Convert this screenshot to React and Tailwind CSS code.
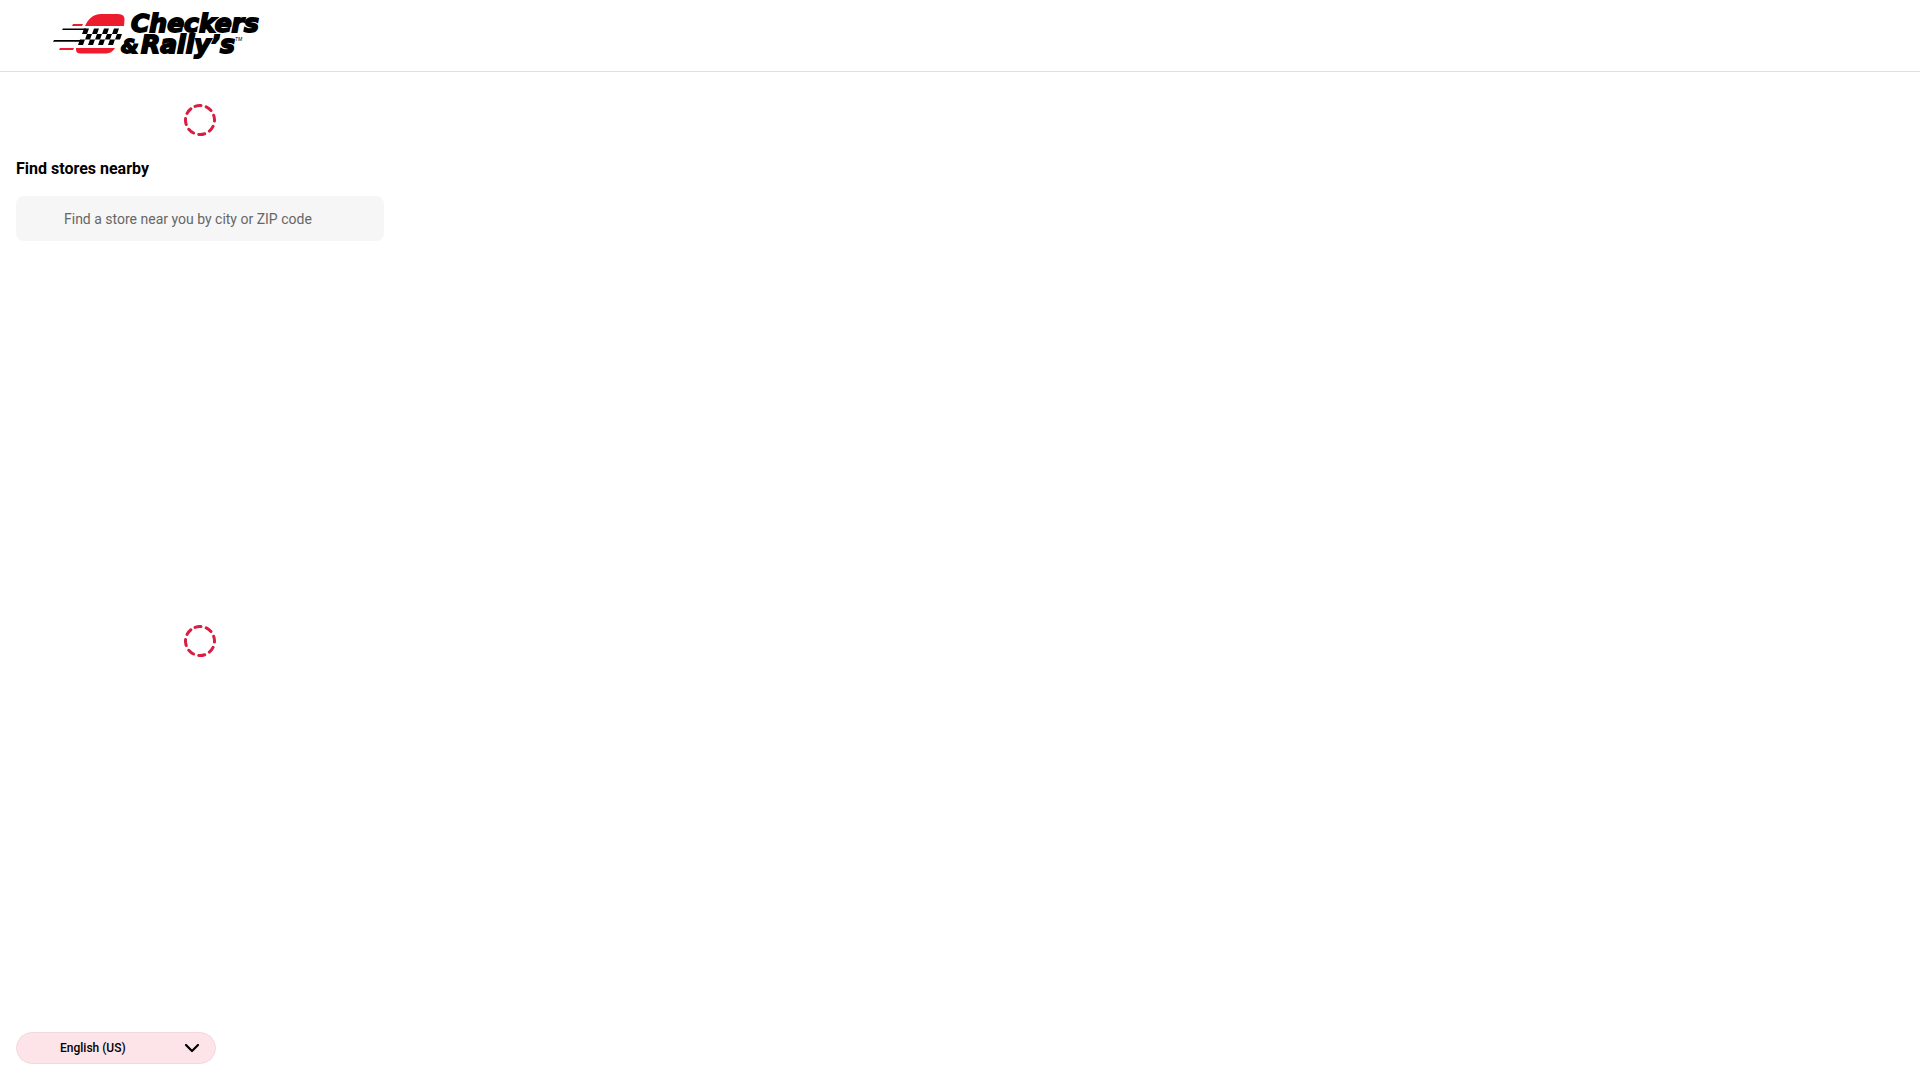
// App.jsx
import { useState } from 'react';

const CHECKERS = [
  { y: 28.5, cells: [84, 94, 104, 114] },
  { y: 34, cells: [87, 97, 107, 117] },
  { y: 39.5, cells: [80, 90, 100, 110] },
];

const Logo = () => (
  <svg
    viewBox="52 8 216 55"
    className="h-[55px] w-[216px]"
    role="img"
    aria-label="Checkers & Rally's"
  >
    <g fill="#ec1b2e">
      <path d="M85 26C88 19 93 14 101 14H118Q125 14 124.500 20L124 26Z" />
      <path d="M76 48H115Q112 53.500 105 53.500H81Q75 53.500 76 48Z" />
      <path d="M73 24H83L82 26H72ZM60 48H74L73 50H59Z" />
    </g>
    <path d="M63 28.500H86V30H62ZM54 40H83V41.700H53Z" />
    {CHECKERS.map((row) =>
      row.cells.map((x) => (
        <path key={`${row.y}-${x}`} d={`M${x} ${row.y}h5l-2 5.500h-5z`} />
      ))
    )}
    <g className="font-['DejaVu_Sans',sans-serif] font-bold italic" stroke="#000" strokeWidth="1.8">
      <text x="131" y="32" fontSize="25">Checkers</text>
      <text x="121" y="53" fontSize="20">&amp;</text>
      <text x="141" y="53" fontSize="25">Rally’s</text>
    </g>
    <text x="235" y="41" fontSize="5" className="font-['Roboto',sans-serif] italic">TM</text>
  </svg>
);

const Spinner = () => (
  <div role="status" aria-label="Loading" className="flex justify-center">
    <svg viewBox="0 0 32 32" className="size-8" fill="none">
      <circle
        cx="16"
        cy="16"
        r="14.500"
        stroke="#d81e42"
        strokeWidth="3"
        strokeLinecap="round"
        strokeDasharray="6 5.388"
        transform="rotate(-110 16 16)"
      />
    </svg>
  </div>
);

const App = () => {
  const [query, setQuery] = useState('');

  return (
    <div className="flex min-h-screen flex-col bg-white font-['Roboto',sans-serif] text-black">
      <header className="flex h-[72px] items-center border-b border-[#e0e0e0] px-[52px]">
        <a href="/">
          <Logo />
        </a>
      </header>

      <main className="flex w-full max-w-[400px] grow flex-col px-4 pt-8 pb-4">
        <Spinner />
        <h1 className="mt-5 text-[16px] leading-[26px] font-bold">Find stores nearby</h1>
        <input
          type="text"
          aria-label="Find a store near you by city or ZIP code"
          placeholder="Find a store near you by city or ZIP code"
          value={query}
          onChange={(e) => setQuery(e.target.value)}
          className="mt-[14px] h-[45px] w-full rounded-lg bg-[#f6f6f6] pr-4 pl-12 text-[14px] placeholder:text-[#666666]"
        />
        <div className="flex grow items-center justify-center pt-2">
          <Spinner />
        </div>
        <div className="relative w-[200px]">
          <select
            aria-label="Language"
            className="h-8 w-full appearance-none rounded-full border border-[#f3d9dd] bg-[#fde4e8] pr-10 pl-[43px] text-[12px] font-medium"
          >
            <option>English (US)</option>
          </select>
          <svg
            viewBox="0 0 16 16"
            className="pointer-events-none absolute top-2 right-4 size-4"
            fill="none"
            stroke="#000"
            strokeWidth="2.2"
            strokeLinecap="round"
            strokeLinejoin="round"
          >
            <path d="M2 5L8 11L14 5" />
          </svg>
        </div>
      </main>
    </div>
  );
};

export default App;
